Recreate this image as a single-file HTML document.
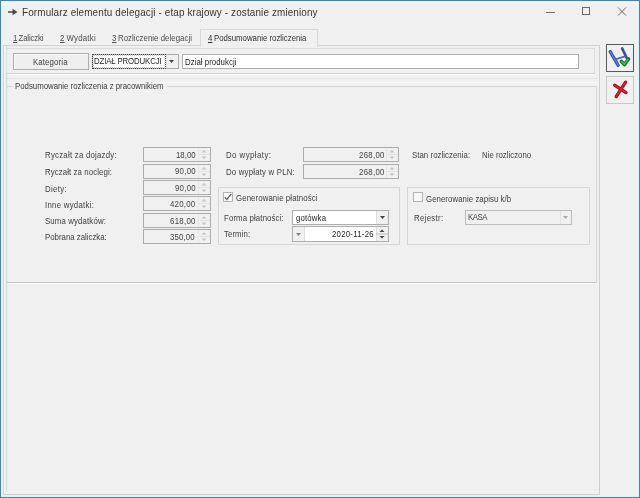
<!DOCTYPE html>
<html><head><meta charset="utf-8">
<style>
*{margin:0;padding:0;box-sizing:border-box}
html,body{width:640px;height:498px;overflow:hidden;background:#f0f0f0}
body{position:relative;font-family:"Liberation Sans",sans-serif;font-size:8px;color:#333}
.a{position:absolute}
.t{position:absolute;white-space:nowrap;line-height:10px;filter:blur(0.3px);color:#404040;transform:scaleX(0.9);transform-origin:0 0}
.f{position:absolute;border:1px solid #acacac;background:#f0f0f0}
.u{text-decoration:underline}
</style></head><body>
<div class="a" style="left:0px;top:0px;width:640px;height:498px;border:1px solid #4a84a0"></div>
<div class="a" style="left:1px;top:1px;width:638px;height:496px;border:1px solid #cdf8fe"></div>
<div class="a" style="left:2px;top:2px;width:636px;height:494px;border:1px solid #e6f4f8"></div>
<div class="a" style="left:3px;top:2px;width:634px;height:3px;background:#f6f0f3"></div>
<svg class="a" style="left:8px;top:8px" width="10" height="8" viewBox="0 0 10 8"><path d="M0 3.2h4.5V0.8L9.5 4 4.5 7.2V4.8H0z" fill="#4a4a4a"/></svg>
<div class="a" style="left:546px;top:12px;width:9px;height:1px;background:#707070"></div>
<div class="a" style="left:582px;top:7px;width:8px;height:8px;border:1px solid #6a6a6a"></div>
<svg class="a" style="left:617px;top:7px" width="10" height="9" viewBox="0 0 10 9"><path d="M1 0.5L9 8.5M9 0.5L1 8.5" stroke="#6a6a6a" stroke-width="1"/></svg>
<div class="a" style="left:3px;top:45px;width:597px;height:450px;border:1px solid #d0d0d0"></div>
<div class="a" style="left:4px;top:46px;width:1px;height:448px;background:#f8f6f6"></div>
<div class="a" style="left:6px;top:46px;width:1px;height:446px;background:#d4d4d4"></div>
<div class="a" style="left:200px;top:29px;width:118px;height:18px;border:1px solid #d9d9d9;border-bottom:none;background:#f0f0f0"></div>
<div class="a" style="left:6px;top:48px;width:589px;height:26px;border:1px solid #dcdcdc;border-bottom-color:#d0d0d0"></div>
<div class="a" style="left:7px;top:74px;width:588px;height:1px;background:#fafafa"></div>
<div class="a" style="left:7px;top:78px;width:590px;height:1px;background:#e2e2e2"></div>
<div class="a" style="left:7px;top:82px;width:590px;height:1px;background:#f8f8f8"></div>
<div class="a" style="left:13px;top:53px;width:76px;height:17px;border:1px solid #adadad;background:#efefef;box-shadow:inset 1px 1px 0 #fafafa"></div>
<div class="a" style="left:92px;top:54px;width:87px;height:15px;border:1px solid #adadad;background:#fff"></div>
<div class="a" style="left:92px;top:54px;width:74px;height:15px;border:1px dotted #484848"></div>
<div class="a" style="left:93px;top:55px;width:72px;height:13px;border:1px dotted #d0d0d0"></div>
<div class="a" style="left:166px;top:55px;width:12px;height:13px;background:#f0f0f0;border-left:1px solid #dedede"></div>
<svg class="a" style="left:169px;top:60px" width="5" height="3"><path d="M0 0h5L2.5 3z" fill="#444"/></svg>
<div class="a" style="left:182px;top:54px;width:397px;height:15px;border:1px solid #adadad;background:#fff"></div>
<div class="a" style="left:606px;top:44px;width:28px;height:28px;border:1px solid #5a5a5a;background:#f0f0f0"></div>
<svg class="a" style="left:606px;top:44px" width="28" height="28" viewBox="0 0 28 28">
  <path d="M4.2 7.6L12.2 21.3" stroke="#3a52a8" stroke-width="3.3" fill="none" stroke-linecap="round"/>
  <path d="M4.2 7.6L12.2 21.3" stroke="#5a84dc" stroke-width="1.2" fill="none" stroke-linecap="round"/>
  <path d="M16.2 4.5L21 14.5" stroke="#3c4e98" stroke-width="2.7" fill="none" stroke-linecap="round"/>
  <path d="M10.3 15.1L19 12.4" stroke="#4a68c0" stroke-width="2" fill="none" stroke-linecap="round"/>
  <path d="M15.3 17.3L18.4 20.6L22.6 15" stroke="#227a2a" stroke-width="3.6" fill="none" stroke-linecap="round" stroke-linejoin="round"/>
  <path d="M15.8 17.6L18.4 20L22 15.4" stroke="#48cc48" stroke-width="1.2" fill="none" stroke-linecap="round" stroke-linejoin="round"/>
</svg>
<div class="a" style="left:606px;top:76px;width:28px;height:28px;border:1px solid #c8c8c8;background:#f0f0f0"></div>
<svg class="a" style="left:606px;top:76px" width="28" height="28" viewBox="0 0 28 28">
  <path d="M8.6 9.2L20 16.6M19.6 6.2L10.2 20.6" stroke="#a8101c" stroke-width="3.3" fill="none" stroke-linecap="round"/>
  <path d="M9 9.5L19.6 16.3M19.2 6.6L10.6 20.2" stroke="#e0202c" stroke-width="1.3" fill="none" stroke-linecap="round"/>
</svg>
<div class="a" style="left:6px;top:86px;width:591px;height:197px;border:1px solid #d5d5d5;border-bottom-color:#c6c6c6"></div>
<div class="a" style="left:7px;top:283px;width:590px;height:1px;background:#fafafa"></div>
<div class="a" style="left:12px;top:84px;width:155px;height:5px;background:#f0f0f0"></div>
<div class="a" style="left:143px;top:147px;width:68px;height:15px;border:1px solid #acacac;background:#f0f0f0"></div>
<svg class="a" style="left:198px;top:148px" width="12" height="13" viewBox="0 0 12 13"><path d="M0.5 0v13" stroke="#e6e6e6"/><path d="M1 6.5h11" stroke="#e2e2e2"/><path d="M3.5 4.6h5L6 2.0999999999999996z M3.5 8.6h5L6 11.1z" fill="#c4c4c4"/></svg>
<div class="a" style="left:143px;top:164px;width:68px;height:15px;border:1px solid #acacac;background:#f0f0f0"></div>
<svg class="a" style="left:198px;top:165px" width="12" height="13" viewBox="0 0 12 13"><path d="M0.5 0v13" stroke="#e6e6e6"/><path d="M1 6.5h11" stroke="#e2e2e2"/><path d="M3.5 4.6h5L6 2.0999999999999996z M3.5 8.6h5L6 11.1z" fill="#c4c4c4"/></svg>
<div class="a" style="left:143px;top:180px;width:68px;height:15px;border:1px solid #acacac;background:#f0f0f0"></div>
<svg class="a" style="left:198px;top:181px" width="12" height="13" viewBox="0 0 12 13"><path d="M0.5 0v13" stroke="#e6e6e6"/><path d="M1 6.5h11" stroke="#e2e2e2"/><path d="M3.5 4.6h5L6 2.0999999999999996z M3.5 8.6h5L6 11.1z" fill="#c4c4c4"/></svg>
<div class="a" style="left:143px;top:196px;width:68px;height:15px;border:1px solid #acacac;background:#f0f0f0"></div>
<svg class="a" style="left:198px;top:197px" width="12" height="13" viewBox="0 0 12 13"><path d="M0.5 0v13" stroke="#e6e6e6"/><path d="M1 6.5h11" stroke="#e2e2e2"/><path d="M3.5 4.6h5L6 2.0999999999999996z M3.5 8.6h5L6 11.1z" fill="#c4c4c4"/></svg>
<div class="a" style="left:143px;top:213px;width:68px;height:15px;border:1px solid #acacac;background:#f0f0f0"></div>
<svg class="a" style="left:198px;top:214px" width="12" height="13" viewBox="0 0 12 13"><path d="M0.5 0v13" stroke="#e6e6e6"/><path d="M1 6.5h11" stroke="#e2e2e2"/><path d="M3.5 4.6h5L6 2.0999999999999996z M3.5 8.6h5L6 11.1z" fill="#c4c4c4"/></svg>
<div class="a" style="left:143px;top:229px;width:68px;height:15px;border:1px solid #acacac;background:#f0f0f0"></div>
<svg class="a" style="left:198px;top:230px" width="12" height="13" viewBox="0 0 12 13"><path d="M0.5 0v13" stroke="#e6e6e6"/><path d="M1 6.5h11" stroke="#e2e2e2"/><path d="M3.5 4.6h5L6 2.0999999999999996z M3.5 8.6h5L6 11.1z" fill="#c4c4c4"/></svg>
<div class="a" style="left:303px;top:147px;width:96px;height:15px;border:1px solid #acacac;background:#f0f0f0"></div>
<svg class="a" style="left:386px;top:148px" width="12" height="13" viewBox="0 0 12 13"><path d="M0.5 0v13" stroke="#e6e6e6"/><path d="M1 6.5h11" stroke="#e2e2e2"/><path d="M3.5 4.6h5L6 2.0999999999999996z M3.5 8.6h5L6 11.1z" fill="#c4c4c4"/></svg>
<div class="a" style="left:303px;top:164px;width:96px;height:15px;border:1px solid #acacac;background:#f0f0f0"></div>
<svg class="a" style="left:386px;top:165px" width="12" height="13" viewBox="0 0 12 13"><path d="M0.5 0v13" stroke="#e6e6e6"/><path d="M1 6.5h11" stroke="#e2e2e2"/><path d="M3.5 4.6h5L6 2.0999999999999996z M3.5 8.6h5L6 11.1z" fill="#c4c4c4"/></svg>
<div class="a" style="left:218px;top:187px;width:182px;height:58px;border:1px solid #d5d5d5"></div>
<div class="a" style="left:223px;top:192px;width:10px;height:10px;border:1px solid #b4b4b4;background:#f7f7f7"></div>
<svg class="a" style="left:224px;top:193px" width="8" height="8" viewBox="0 0 8 8"><path d="M0.8 4.2L2.8 6.6L7.2 0.8" stroke="#585858" stroke-width="1.2" fill="none"/></svg>
<div class="a" style="left:292px;top:210px;width:97px;height:15px;border:1px solid #adadad;background:#fff"></div>
<div class="a" style="left:376px;top:211px;width:12px;height:13px;background:#f0f0f0;border-left:1px solid #dedede"></div>
<svg class="a" style="left:380px;top:216px" width="5" height="3"><path d="M0 0h5L2.5 3z" fill="#444"/></svg>
<div class="a" style="left:292px;top:226px;width:97px;height:16px;border:1px solid #adadad;background:#fff"></div>
<div class="a" style="left:293px;top:227px;width:12px;height:14px;background:#f0f0f0;border-right:1px solid #dedede"></div>
<svg class="a" style="left:296px;top:233px" width="5" height="3"><path d="M0 0h5L2.5 3z" fill="#808080"/></svg>
<div class="a" style="left:376px;top:227px;width:12px;height:14px;background:#f0f0f0;border-left:1px solid #dedede"></div>
<svg class="a" style="left:376px;top:227px" width="12" height="14" viewBox="0 0 12 14"><path d="M3.5 5h5L6 2.5z M3.5 9h5L6 11.5z" fill="#444"/><path d="M0 7h12" stroke="#bbb"/></svg>
<div class="a" style="left:407px;top:187px;width:183px;height:58px;border:1px solid #d5d5d5"></div>
<div class="a" style="left:413px;top:192px;width:10px;height:10px;border:1px solid #b4b4b4;background:#f7f7f7"></div>
<div class="a" style="left:465px;top:210px;width:107px;height:15px;border:1px solid #bcbcbc;background:#f0f0f0"></div>
<div class="a" style="left:560px;top:211px;width:11px;height:13px;border-left:1px solid #e2e2e2"></div>
<svg class="a" style="left:563px;top:216px" width="5" height="3"><path d="M0 0h5L2.5 3z" fill="#aaa"/></svg>
<div class="t" id="title" style="left:22.25px;top:6.90px;letter-spacing:0.147px;font-size:11px;color:#363636">Formularz elementu delegacji - etap krajowy - zostanie zmieniony</div>
<div class="t" id="tab1" style="left:12.80px;top:33.25px;letter-spacing:-0.197px;font-size:8.7px;color:#4c4c4c"><span class="u">1</span> Zaliczki</div>
<div class="t" id="tab2" style="left:60.25px;top:33.25px;letter-spacing:0.277px;font-size:8.7px;color:#4c4c4c"><span class="u">2</span> Wydatki</div>
<div class="t" id="tab3" style="left:112.00px;top:33.25px;letter-spacing:0.052px;font-size:8.7px;color:#4c4c4c"><span class="u">3</span> Rozliczenie delegacji</div>
<div class="t" id="tab4" style="left:208.40px;top:33.25px;letter-spacing:-0.003px;font-size:8.7px;color:#303030"><span class="u">4</span> Podsumowanie rozliczenia</div>
<div class="t" id="kat" style="left:33.35px;top:56.50px;letter-spacing:0.143px;font-size:8.7px;">Kategoria</div>
<div class="t" id="dzial" style="left:94.45px;top:56.20px;letter-spacing:-0.150px;font-size:8.7px;color:#262626">DZIAŁ PRODUKCJI</div>
<div class="t" id="dzial2" style="left:185.00px;top:56.60px;letter-spacing:0.044px;font-size:8.7px;color:#262626">Dział produkcji</div>
<div class="t" id="grp" style="left:14.80px;top:81.00px;letter-spacing:-0.002px;font-size:8.7px;">Podsumowanie rozliczenia z pracownikiem</div>
<div class="t" id="l1" style="left:45.40px;top:149.90px;letter-spacing:0.267px;font-size:8.7px;">Ryczałt za dojazdy:</div>
<div class="t" id="l2" style="left:45.40px;top:166.80px;letter-spacing:0.110px;font-size:8.7px;">Ryczałt za noclegi:</div>
<div class="t" id="l3" style="left:45.40px;top:183.50px;letter-spacing:0.349px;font-size:8.7px;">Diety:</div>
<div class="t" id="l4" style="left:45.40px;top:200.00px;letter-spacing:0.295px;font-size:8.7px;">Inne wydatki:</div>
<div class="t" id="l5" style="left:45.40px;top:216.20px;letter-spacing:0.149px;font-size:8.7px;">Suma wydatków:</div>
<div class="t" id="l6" style="left:45.40px;top:231.80px;letter-spacing:0.005px;font-size:8.7px;">Pobrana zaliczka:</div>
<div class="t" id="v1" style="left:175.60px;top:149.50px;letter-spacing:0.014px;font-size:8.7px;">18,00</div>
<div class="t" id="v2" style="left:174.62px;top:165.90px;letter-spacing:0.286px;font-size:8.7px;">90,00</div>
<div class="t" id="v3" style="left:174.62px;top:183.30px;letter-spacing:0.286px;font-size:8.7px;">90,00</div>
<div class="t" id="v4" style="left:169.65px;top:198.70px;letter-spacing:0.257px;font-size:8.7px;">420,00</div>
<div class="t" id="v5" style="left:169.62px;top:216.10px;letter-spacing:0.324px;font-size:8.7px;">618,00</div>
<div class="t" id="v6" style="left:170.38px;top:231.50px;letter-spacing:0.165px;font-size:8.7px;">350,00</div>
<div class="t" id="dw1" style="left:225.60px;top:149.90px;letter-spacing:0.504px;font-size:8.7px;">Do wypłaty:</div>
<div class="t" id="dw2" style="left:225.60px;top:166.75px;letter-spacing:0.221px;font-size:8.7px;">Do wypłaty w PLN:</div>
<div class="t" id="dv1" style="left:358.55px;top:150.30px;letter-spacing:0.327px;font-size:8.7px;">268,00</div>
<div class="t" id="dv2" style="left:358.55px;top:167.30px;letter-spacing:0.327px;font-size:8.7px;">268,00</div>
<div class="t" id="stan" style="left:412.45px;top:149.90px;letter-spacing:0.050px;font-size:8.7px;">Stan rozliczenia:</div>
<div class="t" id="nie" style="left:481.60px;top:149.90px;letter-spacing:-0.002px;font-size:8.7px;">Nie rozliczono</div>
<div class="t" id="genp" style="left:236.38px;top:193.00px;letter-spacing:0.109px;font-size:8.7px;">Generowanie płatności</div>
<div class="t" id="forma" style="left:224.00px;top:212.80px;letter-spacing:0.141px;font-size:8.7px;">Forma płatności:</div>
<div class="t" id="got" style="left:295.60px;top:212.80px;letter-spacing:0.167px;font-size:8.7px;color:#262626">gotówka</div>
<div class="t" id="term" style="left:224.00px;top:228.50px;letter-spacing:0.090px;font-size:8.7px;">Termin:</div>
<div class="t" id="date" style="left:331.60px;top:228.50px;letter-spacing:0.271px;font-size:8.7px;color:#262626">2020-11-26</div>
<div class="t" id="genk" style="left:426.38px;top:194.30px;letter-spacing:0.065px;font-size:8.7px;">Generowanie zapisu k/b</div>
<div class="t" id="rej" style="left:413.62px;top:213.40px;letter-spacing:0.346px;font-size:8.7px;">Rejestr:</div>
<div class="t" id="kasa" style="left:467.80px;top:212.00px;letter-spacing:-0.506px;font-size:8.7px;">KASA</div>
</body></html>
